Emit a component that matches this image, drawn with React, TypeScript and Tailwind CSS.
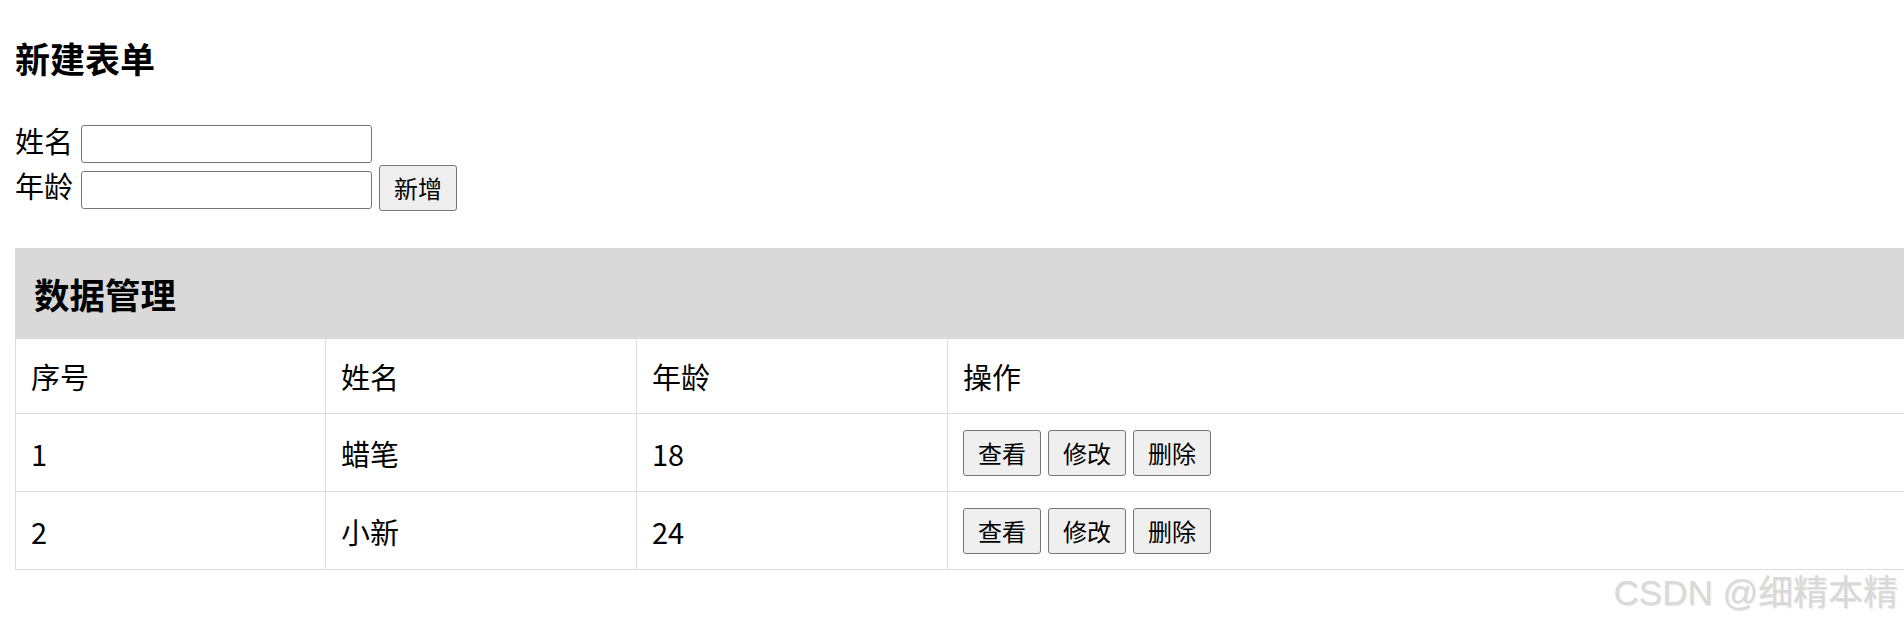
const rows = [
  { id: 1, name: "蜡笔", age: 18 },
  { id: 2, name: "小新", age: 24 },
];

const cell = "flex items-center pl-[15px] border-r border-b border-[#dddddd]";
const btn =
  "h-[46px] w-[78px] rounded-[3px] border border-[#767676] bg-[#efefef] text-[24px] leading-[30px] text-black";

function Field({ label, className }: { label: string; className?: string }) {
  return (
    <div className={`flex items-start gap-[8px] ${className ?? ""}`}>
      <span className="text-[29px] leading-[30px]">{label}</span>
      <input className="h-[38px] w-[291px] rounded-[3px] border border-[#767676] bg-white outline-none" />
    </div>
  );
}

export default function App() {
  return (
    <div className="relative min-h-[628px] bg-white text-black font-['Noto_Sans_CJK_SC',sans-serif]">
      <div className="pl-[15px] pt-[38px]">
        <h3 className="text-[35px] font-bold leading-[40px]">新建表单</h3>

        <Field label="姓名" className="mt-[47px] h-[38px]" />
        <div className="mt-[2px] flex items-start">
          <span className="mt-[5px] text-[29px] leading-[30px]">年龄</span>
          <input className="ml-[8px] mt-[6px] h-[38px] w-[291px] rounded-[3px] border border-[#767676] bg-white outline-none" />
          <button className={`ml-[7px] ${btn}`}>新增</button>
        </div>

        <div className="mt-[37px]">
          <div className="flex h-[91px] items-center bg-[#d9d9d9] pl-[19px]">
            <h2 className="text-[35.5px] font-bold leading-[40px]">数据管理</h2>
          </div>

          <div className="grid grid-cols-[310px_311px_311px_1fr] border-l border-[#dddddd] text-[29px] leading-[36px]">
            <div className={`${cell} h-[75px]`}>序号</div>
            <div className={`${cell} h-[75px]`}>姓名</div>
            <div className={`${cell} h-[75px]`}>年龄</div>
            <div className={`${cell} h-[75px] border-r-0`}>操作</div>

            {rows.map((r) => (
              <div key={r.id} className="contents">
                <div className={`${cell} h-[78px]`}>{r.id}</div>
                <div className={`${cell} h-[78px]`}>{r.name}</div>
                <div className={`${cell} h-[78px]`}>{r.age}</div>
                <div className={`${cell} h-[78px] gap-[7px] border-r-0`}>
                  <button className={btn}>查看</button>
                  <button className={btn}>修改</button>
                  <button className={btn}>删除</button>
                </div>
              </div>
            ))}
          </div>
        </div>
      </div>

      <span className="absolute right-[6px] top-[573px] text-[35px] leading-[40px] text-[#d9d9d9] font-['Liberation_Sans','Noto_Sans_CJK_SC',sans-serif] [text-shadow:1px_1px_1px_rgba(0,0,0,0.1)]">
        CSDN @细精本精
      </span>
    </div>
  );
}
